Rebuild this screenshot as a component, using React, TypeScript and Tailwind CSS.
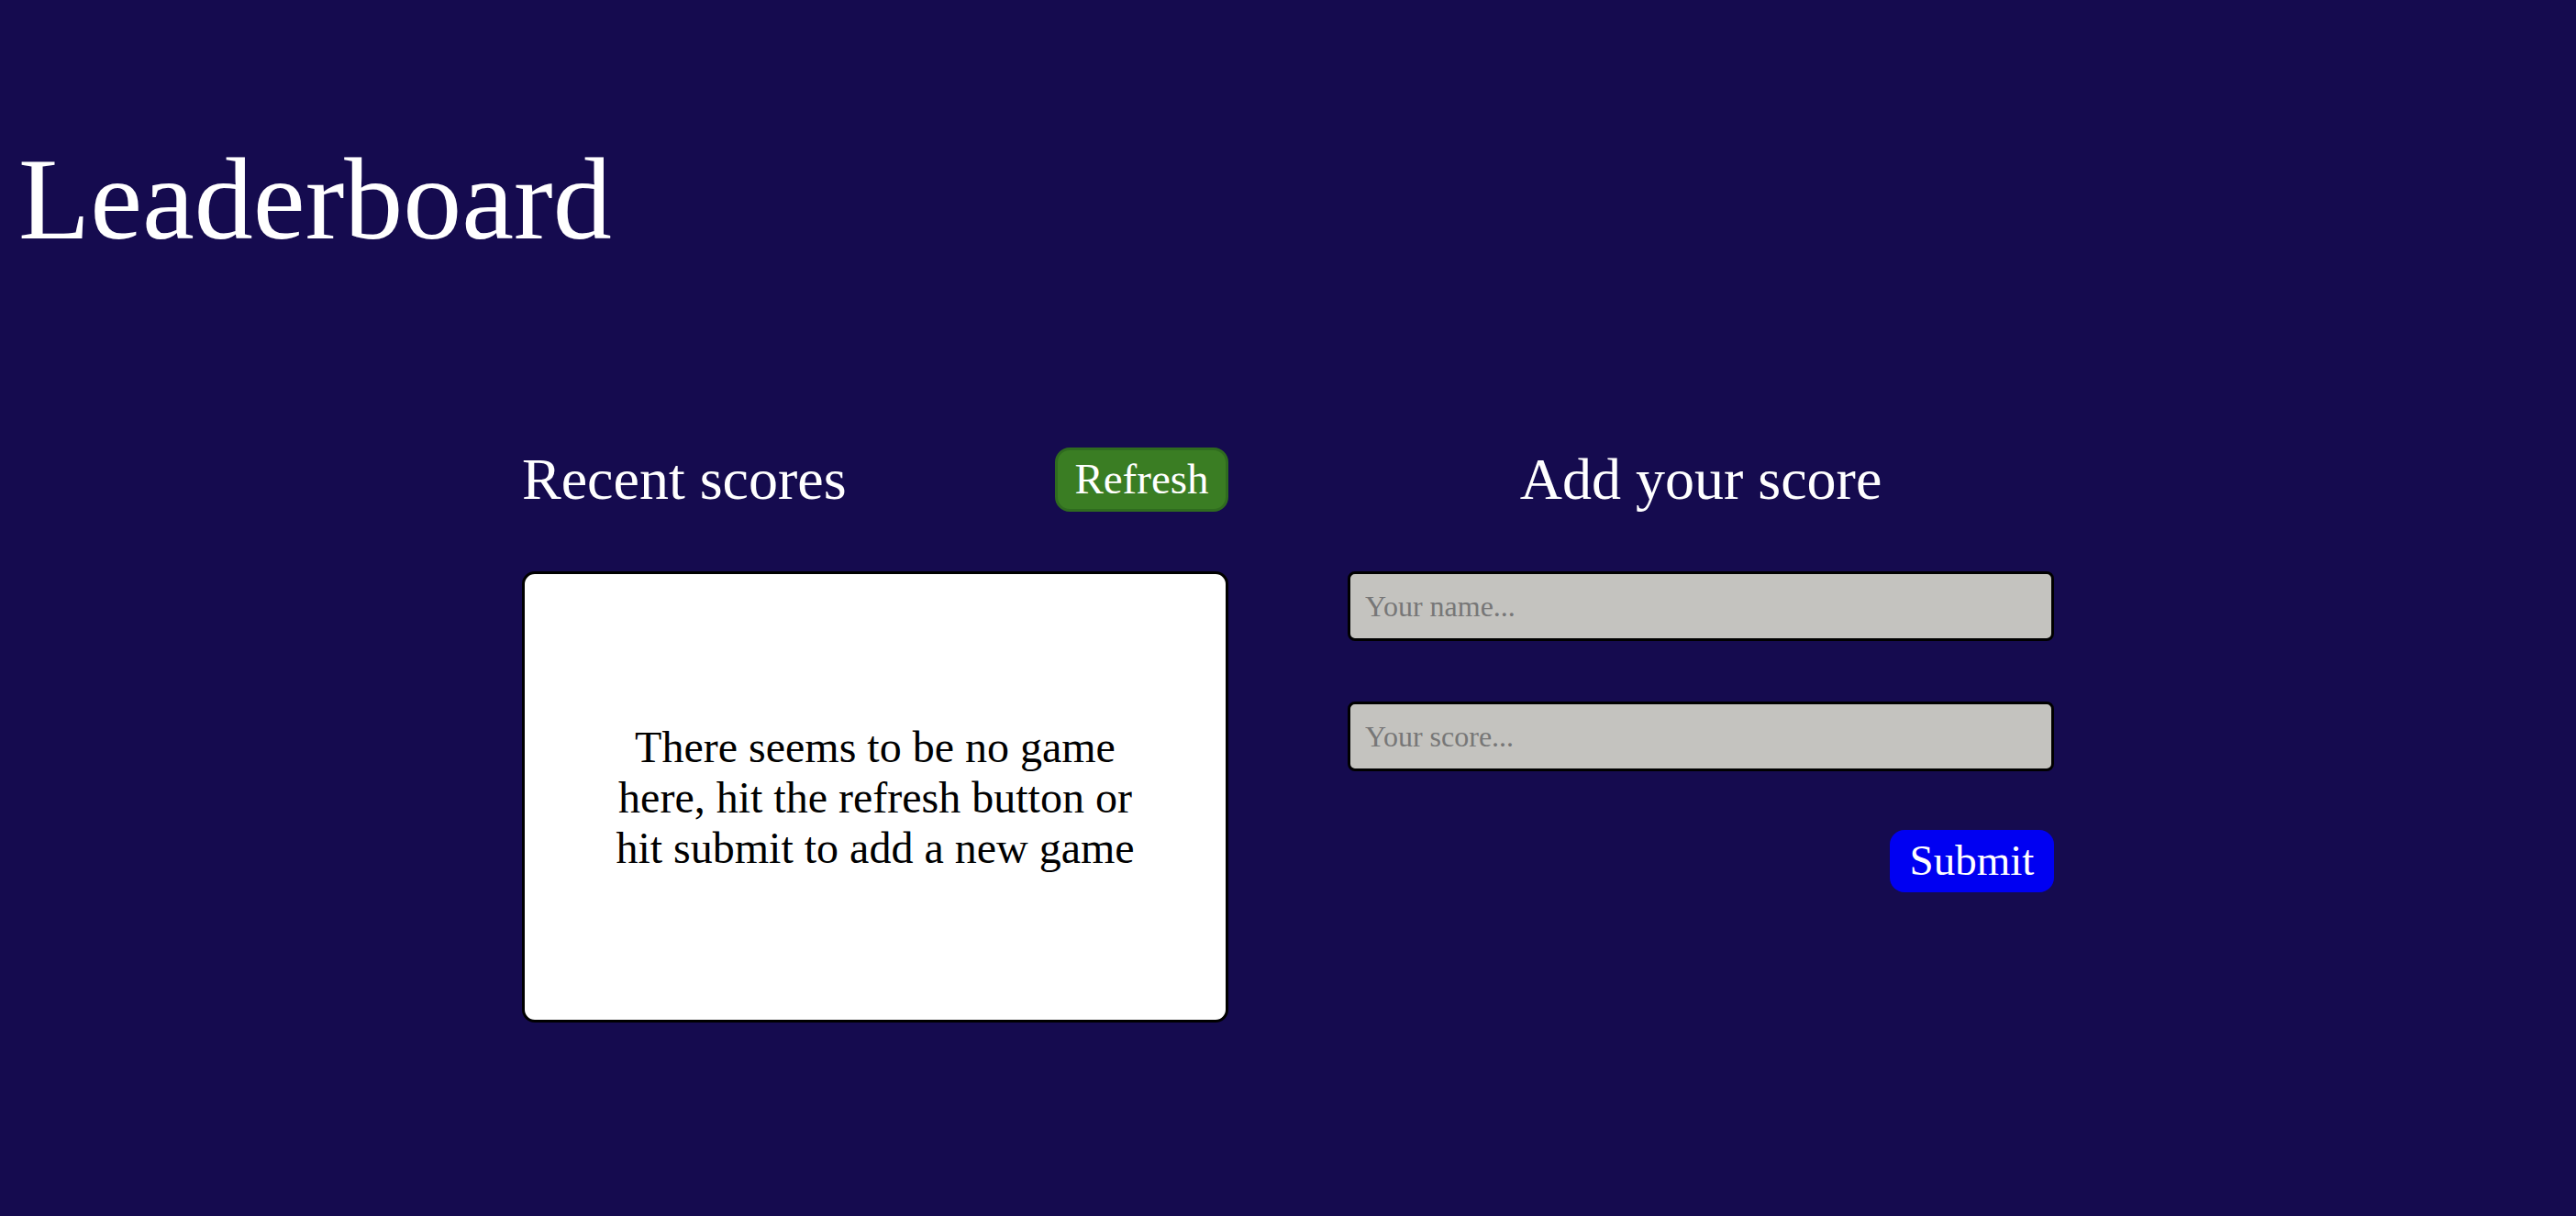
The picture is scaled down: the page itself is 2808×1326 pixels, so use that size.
export default function App() {
	return (
		<main className="min-h-screen w-full bg-[#150b4f] font-['Liberation_Serif',serif] text-white">
			<h1 className="pl-[20px] pt-[153px] text-[128px] leading-[128px] font-normal">
				Leaderboard
			</h1>

			<div className="mt-[207px] flex justify-center gap-[130px]">
				{/* recent scores */}
				<section className="flex w-[770px] flex-col">
					<div className="flex h-[70px] items-center justify-between">
						<h2 className="text-[64px] leading-[70px] font-normal">Recent scores</h2>
						<button className="flex h-[70px] w-[189px] items-center justify-center rounded-[16px] border-[3px] border-[#2f6b1f] bg-[#3a7d23] pb-[3px] text-[47px] leading-[54px] text-white">
							Refresh
						</button>
					</div>
					<div className="mt-[65px] flex h-[492px] items-center justify-center rounded-[14px] border-[3px] border-black bg-white">
						<p className="w-[600px] text-center text-[48px] leading-[55px] text-black">
							There seems to be no game here, hit the refresh button or hit submit to add a new game
						</p>
					</div>
				</section>

				{/* add score */}
				<section className="flex w-[770px] flex-col">
					<div className="flex h-[70px] items-center justify-center">
						<h2 className="text-[64px] leading-[70px] font-normal">Add your score</h2>
					</div>
					<form
						className="flex flex-col"
						onSubmit={(e) => {
							e.preventDefault();
						}}>
						<input
							className="mt-[65px] h-[76px] w-full rounded-[8px] border-[3px] border-black bg-[#c4c3bf] pl-4 text-[32px] text-black placeholder:text-[#777777] outline-none"
							type="text"
							name="name"
							placeholder="Your name..."
						/>
						<input
							className="mt-[66px] h-[76px] w-full rounded-[8px] border-[3px] border-black bg-[#c4c3bf] pl-4 text-[32px] text-black placeholder:text-[#777777] outline-none"
							type="text"
							name="score"
							placeholder="Your score..."
						/>
						<div className="mt-[64px] flex justify-end">
							<button className="flex h-[68px] w-[179px] items-center justify-center rounded-[16px] bg-[#0000f2] pb-[2px] text-[47px] leading-[54px] text-white">
								Submit
							</button>
						</div>
					</form>
				</section>
			</div>
		</main>
	);
}
